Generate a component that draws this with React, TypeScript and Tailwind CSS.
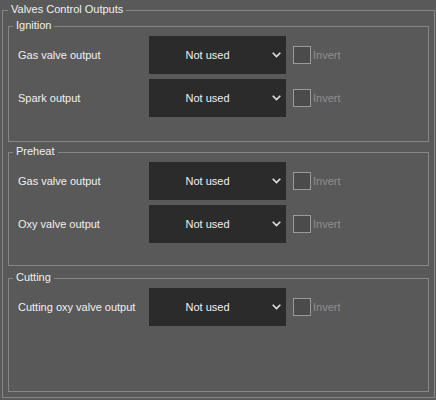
import { ReactNode } from 'react';

const font = { fontFamily: '"Liberation Sans", Arial, sans-serif' };

function Chevron() {
  return (
    <svg width="9" height="6" viewBox="0 0 9 6" className="shrink-0">
      <polyline points="0.7,0.7 4.5,4.6 8.3,0.7" fill="none" stroke="#e0e0e0" strokeWidth="1.6" />
    </svg>
  );
}

function OutputRow({ label }: { label: string }) {
  return (
    <div className="flex items-center h-[38px]">
      <div className="w-[131px] text-[11px] text-[#f0f0f0]">{label}</div>
      <div className="flex items-center w-[137px] h-[38px] bg-[#2b2b2b] pr-[5px]">
        <span className="flex-1 text-center text-[11px] text-[#f0f0f0]">Not used</span>
        <span className="ml-[6px] flex items-center">
          <Chevron />
        </span>
      </div>
      <div className="ml-[7px] w-[18px] h-[18px] border border-[#9a9a9a] bg-[#4b4b4b]" />
      <span className="ml-[2px] text-[11px] text-[#8e8e8e]">Invert</span>
    </div>
  );
}

function Group({ title, height, children }: { title: string; height: string; children: ReactNode }) {
  return (
    <div className={`relative border border-[#868686] ${height} pl-[9px] pt-[9px]`}>
      <span className="absolute left-[4px] -top-[9px] px-[3px] bg-[#595959] text-[11px] leading-[14px] text-[#f0f0f0]">
        {title}
      </span>
      <div className="flex flex-col gap-[5px]">{children}</div>
    </div>
  );
}

export default function App() {
  return (
    <div className="w-[436px] h-[400px] bg-[#595959] pt-[10px] pl-[2px]" style={font}>
      <div className="relative w-[433px] h-[388px] border border-[#868686] pt-[15px] px-[5px]">
        <span className="absolute left-[5px] -top-[9px] px-[3px] bg-[#595959] text-[11px] leading-[14px] text-[#f0f0f0]">
          Valves Control Outputs
        </span>
        <Group title="Ignition" height="h-[116px]">
          <OutputRow label="Gas valve output" />
          <OutputRow label="Spark output" />
        </Group>
        <div className="h-[10px]" />
        <Group title="Preheat" height="h-[114px]">
          <OutputRow label="Gas valve output" />
          <OutputRow label="Oxy valve output" />
        </Group>
        <div className="h-[12px]" />
        <Group title="Cutting" height="h-[114px]">
          <OutputRow label="Cutting oxy valve output" />
        </Group>
      </div>
    </div>
  );
}
